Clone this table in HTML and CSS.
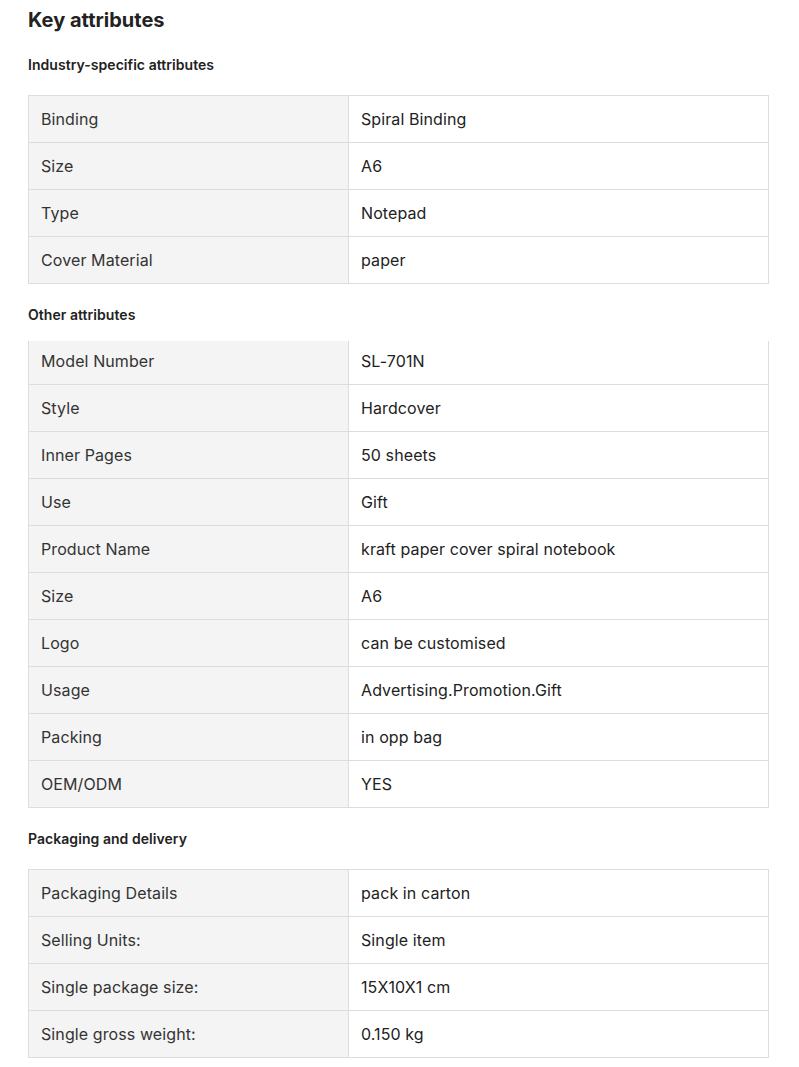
FILE: index.html
```html
<!DOCTYPE html>
<html>
<head>
<meta charset="utf-8">
<link rel="stylesheet" href="styles.css">
</head>
<body>
<div class="page">
  <h1 class="title">Key attributes</h1>
  <h2 class="sub">Industry-specific attributes</h2>
  <div class="table">
    <div class="row"><div class="k">Binding</div><div class="v">Spiral Binding</div></div>
    <div class="row"><div class="k">Size</div><div class="v">A6</div></div>
    <div class="row"><div class="k">Type</div><div class="v">Notepad</div></div>
    <div class="row"><div class="k">Cover Material</div><div class="v">paper</div></div>
  </div>
  <h2 class="sub">Other attributes</h2>
  <div class="clip">
    <div class="table cut">
      <div class="row"><div class="k">Model Number</div><div class="v">SL-701N</div></div>
      <div class="row"><div class="k">Style</div><div class="v">Hardcover</div></div>
      <div class="row"><div class="k">Inner Pages</div><div class="v">50 sheets</div></div>
      <div class="row"><div class="k">Use</div><div class="v">Gift</div></div>
      <div class="row"><div class="k">Product Name</div><div class="v">kraft paper cover spiral notebook</div></div>
      <div class="row"><div class="k">Size</div><div class="v">A6</div></div>
      <div class="row"><div class="k">Logo</div><div class="v">can be customised</div></div>
      <div class="row"><div class="k">Usage</div><div class="v">Advertising.Promotion.Gift</div></div>
      <div class="row"><div class="k">Packing</div><div class="v">in opp bag</div></div>
      <div class="row"><div class="k">OEM/ODM</div><div class="v">YES</div></div>
    </div>
  </div>
  <h2 class="sub">Packaging and delivery</h2>
  <div class="table">
    <div class="row"><div class="k">Packaging Details</div><div class="v">pack in carton</div></div>
    <div class="row"><div class="k">Selling Units:</div><div class="v">Single item</div></div>
    <div class="row"><div class="k">Single package size:</div><div class="v">15X10X1 cm</div></div>
    <div class="row"><div class="k">Single gross weight:</div><div class="v">0.150 kg</div></div>
  </div>
</div>
</body>
</html>
```
FILE: styles.css
```css
html, body {
  margin: 0;
  padding: 0;
  background: #fff;
}
body {
  font-family: Inter, "Noto Sans", sans-serif;
  color: #222;
}
.page {
  padding: 6px 0 0 28px;
  width: 741px;
}
.title {
  margin: 0;
  font-size: 20px;
  line-height: 28px;
  font-weight: 700;
  color: #222;
}
.sub {
  margin: 21px 0 20px;
  font-size: 14px;
  line-height: 20px;
  font-weight: 600;
  letter-spacing: 0.05px;
  color: #222;
}
.table {
  border: 1px solid #dddddd;
  border-bottom: none;
}
.row {
  display: grid;
  grid-template-columns: 320px 1fr;
  border-bottom: 1px solid #dddddd;
}
.k, .v {
  height: 46px;
  display: flex;
  align-items: center;
  padding: 0 12px;
  font-size: 16px;
  letter-spacing: 0.1px;
}
.k {
  background: #f4f4f4;
  border-right: 1px solid #dddddd;
  color: #333;
}
.v {
  color: #222;
}
.clip {
  overflow: hidden;
  margin-top: -4px;
}
.cut {
  margin-top: -4px;
}
```
